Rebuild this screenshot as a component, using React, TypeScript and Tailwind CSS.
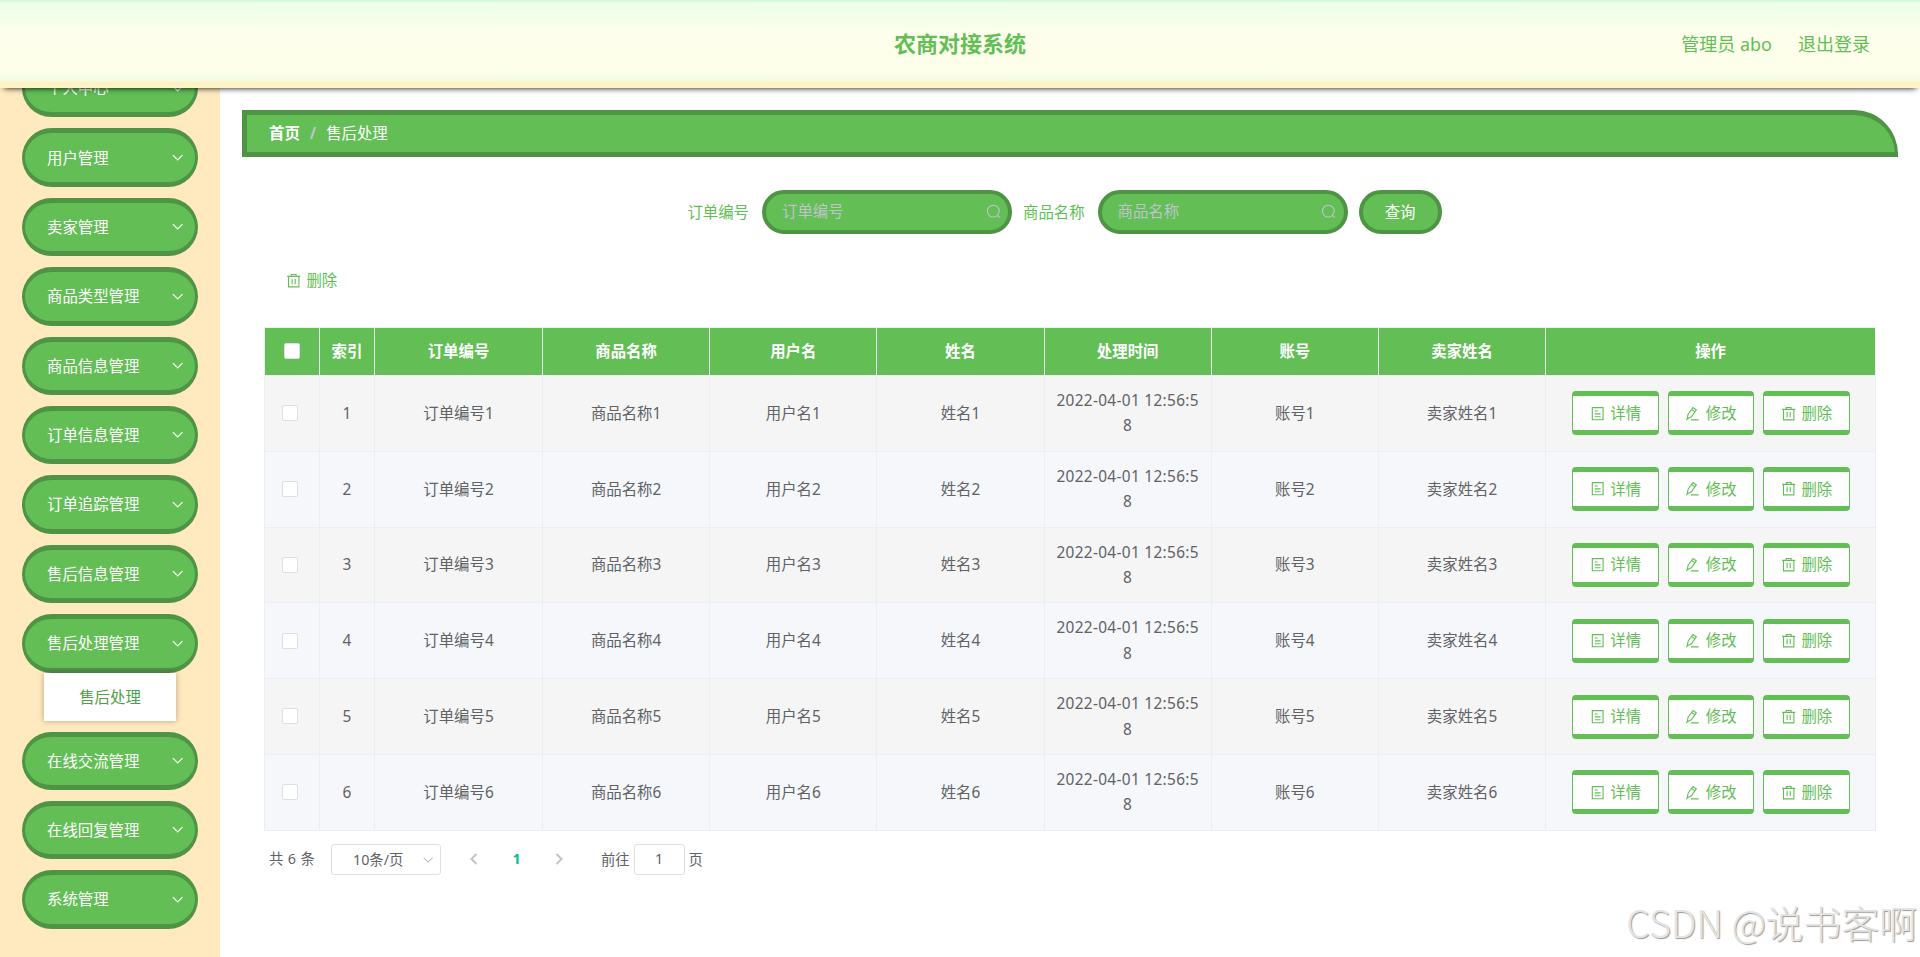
import type { ReactNode } from "react";
import clsx from "clsx";

const menus = [
  { name: "个人中心" },
  { name: "用户管理" },
  { name: "卖家管理" },
  { name: "商品类型管理" },
  { name: "商品信息管理" },
  { name: "订单信息管理" },
  { name: "订单追踪管理" },
  { name: "售后信息管理" },
  { name: "售后处理管理", child: "售后处理" },
  { name: "在线交流管理" },
  { name: "在线回复管理" },
  { name: "系统管理" },
];

const columns = ["订单编号", "商品名称", "用户名", "姓名", "处理时间", "账号", "卖家姓名"];

const rows = [1, 2, 3, 4, 5, 6].map((n) => ({
  id: n,
  cells: [
    `订单编号${n}`,
    `商品名称${n}`,
    `用户名${n}`,
    `姓名${n}`,
    "2022-04-01 12:56:58",
    `账号${n}`,
    `卖家姓名${n}`,
  ],
}));

/* ── icons ── */
function Icon({ children, className }: { children: ReactNode; className?: string }) {
  return (
    <svg
      viewBox="0 0 16 16"
      fill="none"
      stroke="currentColor"
      strokeWidth="1.15"
      className={clsx("shrink-0", className)}
      aria-hidden="true"
    >
      {children}
    </svg>
  );
}

function ChevronDown({ className }: { className?: string }) {
  return (
    <Icon className={className}>
      <path d="M3 5.3L8 10.3L13 5.3" />
    </Icon>
  );
}

function SearchIcon() {
  return (
    <Icon className="size-[15.4px]">
      <circle cx="7.6" cy="7.4" r="6.1" />
      <path d="M12 11.8L14.4 14.2" />
    </Icon>
  );
}

function TrashIcon() {
  return (
    <Icon className="size-[15.4px]">
      <path d="M1.2 3.5H14.8M5.5 3.3V1.6H10.5V3.3M2.6 3.5V14.4H13.4V3.5M6.4 6.3V11.6M9.6 6.3V11.6" />
    </Icon>
  );
}

function DocumentIcon() {
  return (
    <Icon className="size-[15.4px]">
      <path d="M2.4 1.7H13.6V14.3H2.4ZM5 5.2H8M5 8.2H11M5 11.2H11" />
    </Icon>
  );
}

function EditIcon() {
  return (
    <Icon className="size-[15.4px]">
      <path d="M3.2 8.6L8.3 1.6L11.8 4.1L6.6 11.3L2.4 13.3ZM6.9 3.6L10.4 6.1M6.2 14.4H14.2M2.4 13.3L1.4 14.6" />
    </Icon>
  );
}

const actions = [
  { label: "详情", icon: <DocumentIcon /> },
  { label: "修改", icon: <EditIcon /> },
  { label: "删除", icon: <TrashIcon /> },
];

function Header() {
  return (
    <header className="relative z-10 grid h-[88px] shrink-0 grid-cols-3 items-center border-t-2 border-b-[7px] border-t-[#d4fcdc] border-b-[#fff4c6] bg-[linear-gradient(180deg,#ebfee8_0%,#fdffec_42%,#feffea_85%,#f4f9e6_100%)] px-[50px] text-[#62be55] shadow-[0_4px_6px_-4px_#000]">
      <h1 className="col-start-2 pt-0.5 text-center text-[22px] leading-none font-bold">农商对接系统</h1>
      <div className="flex justify-end gap-[26px] pt-1 text-[18px] leading-none">
        <span>管理员 abo</span>
        <span>退出登录</span>
      </div>
    </header>
  );
}

function Sidebar() {
  return (
    <aside className="w-[220px] shrink-0 bg-[#ffeabf] px-[22px]">
      <ul className="-mt-[29px]">
        {menus.map((m) => (
          <li key={m.name} className="mb-[11px]">
            <div className="flex h-[58.4px] items-center justify-between rounded-[30px] border-x-[3px] border-y-[5px] border-[#4f9444] bg-[#62be55] pr-[10px] pl-[22px] text-white">
              <span className="pt-px">{m.name}</span>
              <ChevronDown className="size-[15.4px]" />
            </div>
            {m.child && (
              <div className="mx-[22px] flex h-12 items-center justify-center bg-white pt-0.5 text-[#4f9f43] shadow-[0_0_6px_rgba(0,0,0,0.3)]">
                {m.child}
              </div>
            )}
          </li>
        ))}
      </ul>
    </aside>
  );
}

function SearchField({ label }: { label: string }) {
  return (
    <label className="flex items-center gap-[13px] text-[#62be55]">
      <span className="pt-px">{label}</span>
      <span className="flex h-11 w-[250px] items-center justify-between rounded-[22px] border-4 border-[#4f9444] bg-[#62be55] pr-[7px] pb-px pl-4 text-[#c0c4cc]">
        <span>{label}</span>
        <SearchIcon />
      </span>
    </label>
  );
}

function Checkbox() {
  return <span className="mb-[3px] inline-block size-4 rounded-xs border border-[#dcdfe6] bg-white align-middle" />;
}

function DataTable() {
  return (
    <table className="w-[1612px] table-fixed border-collapse text-center text-[#606266]">
      <colgroup>
        <col className="w-[55px]" />
        <col className="w-[55px]" />
        {columns.map((c, i) => (
          <col key={c} className={i === 0 ? "w-[168px]" : "w-[167.2px]"} />
        ))}
        <col />
      </colgroup>
      <thead>
        <tr className="h-12 bg-[#62be55] text-white">
          <th className="border border-[#ebeef5]">
            <Checkbox />
          </th>
          <th className="border border-[#ebeef5]">索引</th>
          {columns.map((c) => (
            <th key={c} className="border border-[#ebeef5]">
              {c}
            </th>
          ))}
          <th className="border border-[#ebeef5]">操作</th>
        </tr>
      </thead>
      <tbody>
        {rows.map((row, i) => (
          <tr key={row.id} className={clsx("h-[75.8px]", i % 2 ? "bg-[#f5f7fa]" : "bg-[#f5f5f5]")}>
            <td className="border border-[#ebeef5] pr-1">
              <Checkbox />
            </td>
            <td className="border border-[#ebeef5]">{row.id}</td>
            {row.cells.map((cell, j) => (
              <td
                key={cell}
                className={clsx(
                  "border border-[#ebeef5] px-[11px] leading-[25.3px] break-all",
                  j === 4 && "tracking-[0.33px]",
                )}
              >
                {cell}
              </td>
            ))}
            <td className="border border-[#ebeef5] pl-px">
              <div className="flex justify-center gap-[8.8px]">
                {actions.map((a) => (
                  <button
                    key={a.label}
                    className="flex h-11 w-[86.8px] items-center justify-center gap-[5px] rounded-[4px] border-x border-y-[5px] border-[#62be55] bg-white text-[#62be55]"
                  >
                    {a.icon}
                    {a.label}
                  </button>
                ))}
              </div>
            </td>
          </tr>
        ))}
      </tbody>
    </table>
  );
}

function Pagination() {
  return (
    <div className="mt-[13px] flex h-[31px] items-center pl-[5px] text-[14.3px] text-[#606266]">
      <span className="w-[62px] pb-0.5 tracking-[0.4px]">共 6 条</span>
      <span className="flex h-[31px] w-[110px] items-center justify-between rounded-[3px] border border-[#dcdfe6] bg-white pr-[5px] pl-[21px]">
        10条/页
        <ChevronDown className="mt-0.5 size-[14.3px] text-[#c0c4cc]" />
      </span>
      <Icon className="ml-[25px] size-4 stroke-2 text-[#c0c4cc]">
        <path d="M10.5 3L5.5 8L10.5 13" />
      </Icon>
      <span className="w-[69px] pb-0.5 text-center font-bold text-[#00c292]">1</span>
      <Icon className="size-4 stroke-2 text-[#c0c4cc]">
        <path d="M5.5 3L10.5 8L5.5 13" />
      </Icon>
      <span className="ml-[34px]">前往</span>
      <span className="mx-1 flex h-[31px] w-[51px] items-center justify-center rounded-[3px] border border-[#dcdfe6] bg-white pb-0.5">
        1
      </span>
      <span>页</span>
    </div>
  );
}

export default function App() {
  return (
    <div className="relative flex h-screen flex-col overflow-hidden bg-white font-['Noto_Sans','Noto_Sans_CJK_SC',sans-serif] text-[15.4px]">
      <Header />
      <div className="flex min-h-0 flex-1">
        <Sidebar />
        <main className="flex-1 p-[22px]">
          <nav className="flex h-[47px] items-center rounded-tr-[44px] border-y-[5px] border-r-[3px] border-l-[5px] border-[#4f9444] bg-[#62be55] pl-[22px] text-white">
            <span className="font-bold">首页</span>
            <span className="mx-[10px] font-bold text-[#c0c4cc]">/</span>
            <span>售后处理</span>
          </nav>

          <div className="mt-[33px] flex justify-center gap-[11px] pr-[11px]">
            <SearchField label="订单编号" />
            <SearchField label="商品名称" />
            <button className="h-11 w-[83px] rounded-[22px] border-4 border-[#4f9444] bg-[#62be55] pt-px text-white">
              查询
            </button>
          </div>

          <div className="px-[22px]">
            <button className="mt-[25px] mb-[24px] ml-[22px] flex h-11 items-center gap-[5px] text-[#62be55]">
              <TrashIcon />
              删除
            </button>
            <DataTable />
            <Pagination />
          </div>
        </main>
      </div>
      <div className="absolute right-[3px] bottom-[10px] font-['Noto_Sans_CJK_SC',sans-serif] text-[37.8px] leading-[50px] font-light text-[#e4e4e4] [text-shadow:1px_1px_1px_#999]">
        CSDN @说书客啊
      </div>
    </div>
  );
}
